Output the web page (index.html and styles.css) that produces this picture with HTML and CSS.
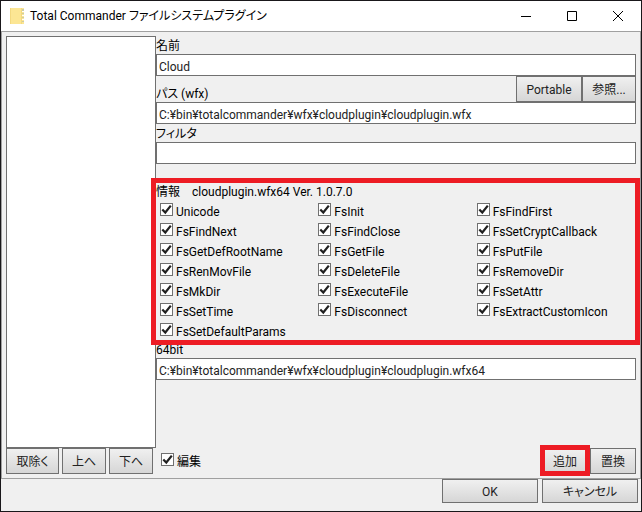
FILE: index.html
```html
<!DOCTYPE html>
<html lang="ja">
<head>
<meta charset="utf-8">
<meta name="viewport" content="width=device-width, initial-scale=1">
<title>Total Commander ファイルシステムプラグイン</title>
<link rel="stylesheet" href="styles.css">
</head>
<body>
<div class="window">
  <header class="titlebar">
    <svg class="app-icon" viewBox="0 0 14 16" aria-hidden="true">
      <path fill="#fce694" d="M0 0h14v16H0z"/>
      <path fill="#f3d980" d="M0 0h1v16H0zM11 0h1v16h-1z"/>
      <path fill="#c9cba8" d="M12 1h2v2h-2zM12 5h2v1h-2zM12 9h2v1h-2zM12 13h2v1h-2z"/>
      <path fill="#fff" d="M12 3h2v1h-2zM12 7h2v1h-2zM12 11h2v1h-2z"/>
    </svg>
    <h1 class="title">Total Commander ファイルシステムプラグイン</h1>
    <div class="window-controls">
      <button class="control" type="button" aria-label="最小化"><svg viewBox="0 0 10 10"><path d="M0 5.5h10"/></svg></button>
      <button class="control" type="button" aria-label="最大化"><svg viewBox="0 0 10 10"><path d="M.5.5h9v9h-9z"/></svg></button>
      <button class="control" type="button" aria-label="閉じる"><svg viewBox="0 0 10 10"><path d="M0 0l10 10M10 0L0 10"/></svg></button>
    </div>
  </header>

  <main class="panel">
    <div class="plugin-list" role="listbox" aria-label="プラグイン"></div>
    <form class="details">
      <div class="label-row"><label for="name">名前</label></div>
      <input class="field" id="name" type="text" value="Cloud">
      <div class="label-row path-row">
        <label for="path">パス (wfx)</label>
        <button class="button portable" type="button">Portable</button>
        <button class="button browse" type="button">参照...</button>
      </div>
      <input class="field" id="path" type="text" value="C:¥bin¥totalcommander¥wfx¥cloudplugin¥cloudplugin.wfx">
      <div class="label-row"><label for="filter">フィルタ</label></div>
      <input class="field" id="filter" type="text">
      <section class="info highlight">
        <p class="info-title"><span>情報</span><span>cloudplugin.wfx64 Ver. 1.0.7.0</span></p>
        <div class="functions">
          <label class="check"><input type="checkbox" checked>Unicode</label>
          <label class="check"><input type="checkbox" checked>FsInit</label>
          <label class="check"><input type="checkbox" checked>FsFindFirst</label>
          <label class="check"><input type="checkbox" checked>FsFindNext</label>
          <label class="check"><input type="checkbox" checked>FsFindClose</label>
          <label class="check"><input type="checkbox" checked>FsSetCryptCallback</label>
          <label class="check"><input type="checkbox" checked>FsGetDefRootName</label>
          <label class="check"><input type="checkbox" checked>FsGetFile</label>
          <label class="check"><input type="checkbox" checked>FsPutFile</label>
          <label class="check"><input type="checkbox" checked>FsRenMovFile</label>
          <label class="check"><input type="checkbox" checked>FsDeleteFile</label>
          <label class="check"><input type="checkbox" checked>FsRemoveDir</label>
          <label class="check"><input type="checkbox" checked>FsMkDir</label>
          <label class="check"><input type="checkbox" checked>FsExecuteFile</label>
          <label class="check"><input type="checkbox" checked>FsSetAttr</label>
          <label class="check"><input type="checkbox" checked>FsSetTime</label>
          <label class="check"><input type="checkbox" checked>FsDisconnect</label>
          <label class="check"><input type="checkbox" checked>FsExtractCustomIcon</label>
          <label class="check"><input type="checkbox" checked>FsSetDefaultParams</label>
        </div>
      </section>
      <div class="label-row"><label for="path64">64bit</label></div>
      <input class="field" id="path64" type="text" value="C:¥bin¥totalcommander¥wfx¥cloudplugin¥cloudplugin.wfx64">
    </form>
    <div class="list-actions">
      <button class="button remove" type="button">取除く</button>
      <button class="button move" type="button">上へ</button>
      <button class="button move" type="button">下へ</button>
    </div>
    <div class="edit-actions">
      <label class="check edit"><input type="checkbox" checked>編集</label>
      <span class="add highlight"><button class="button" type="button">追加</button></span>
      <button class="button replace" type="button">置換</button>
    </div>
  </main>

  <footer class="footer">
    <button class="button" type="button">OK</button>
    <button class="button" type="button">キャンセル</button>
  </footer>
</div>
</body>
</html>
```
FILE: styles.css
```css
* {
  box-sizing: border-box;
}

body {
  margin: 0;
  color: #000;
  font: 12px/20px Roboto, "Noto Sans CJK JP", sans-serif;
  font-feature-settings: "palt";
}

button,
input {
  font: inherit;
  font-feature-settings: inherit;
  color: inherit;
}

.window {
  display: flex;
  flex-direction: column;
  min-height: 100vh;
  border: 1px solid #19171a;
  background: #f0f0f0;
}

/* Title bar */
.titlebar {
  display: flex;
  align-items: center;
  height: 30px;
  padding-left: 9px;
  background: #fff;
}

.app-icon {
  width: 14px;
  height: 16px;
  margin-right: 6px;
}

.title {
  margin: 0;
  font-size: 12px;
  font-weight: 400;
  white-space: nowrap;
}

.window-controls {
  display: flex;
  margin-left: auto;
}

.control {
  display: grid;
  place-items: center;
  width: 46px;
  height: 30px;
  padding: 0;
  border: 0;
  background: none;
}

.control svg {
  width: 10px;
  height: 10px;
  fill: none;
  stroke: #000;
  overflow: visible;
}

/* Main panel */
.panel {
  flex: 1;
  display: grid;
  grid-template-columns: 150px 1fr;
  grid-template-rows: 1fr 26px;
  padding: 4px;
  border: 1px solid #a0a0a0;
}

.plugin-list {
  border: 1px solid #707070;
  background: #fff;
}

.details {
  display: flex;
  flex-direction: column;
}

.label-row {
  height: 18px;
}

.path-row {
  display: flex;
  height: 26px;
}

.path-row label {
  margin-right: auto;
  padding-top: 8px;
}

.field {
  width: 100%;
  height: 22px;
  padding: 4px 2px 0;
  border: 1px solid #707070;
  border-radius: 0;
  background: #fff;
  color: #222;
}

.button {
  padding: 2px 0 0;
  border: 1px solid #707070;
  border-radius: 0;
  background: linear-gradient(#f0f0f0, #d6d6d6);
  color: #222;
}

.portable {
  width: 66px;
}

.browse {
  width: 54px;
}

.highlight {
  position: relative;
}

.highlight::after {
  content: "";
  position: absolute;
  border: 5px solid #ed1c24;
  pointer-events: none;
}

.info {
  padding-top: 18px;
}

.info::after {
  inset: 14px -4px -5px -5px;
}

.info-title {
  display: flex;
  gap: 12px;
  height: 18px;
  margin: 0;
}

.functions {
  display: grid;
  grid-template-columns: repeat(3, 1fr);
  grid-auto-rows: 20px;
  padding: 0 1px 0 4px;
}

.check {
  display: flex;
  align-items: flex-start;
  gap: 3px;
  white-space: nowrap;
}

.check input {
  appearance: none;
  flex: none;
  width: 13px;
  height: 13px;
  margin: 1px 0 0;
  border: 1px solid #707070;
  background: #fff url("data:image/svg+xml,%3Csvg xmlns='http://www.w3.org/2000/svg' viewBox='0 0 11 11'%3E%3Cpath d='M1.3 5.4l3 3.1L9.8 1.6' fill='none' stroke='%23212121' stroke-width='2.2'/%3E%3C/svg%3E");
}

.functions .check {
  padding-top: 2px;
}

/* Button rows */
.list-actions {
  display: flex;
  gap: 3px;
}

.remove {
  width: 53px;
}

.move {
  width: 44px;
}

.edit-actions {
  display: flex;
}

.edit {
  margin-right: auto;
  padding: 4px 0 0 5px;
}

.add {
  display: flex;
  margin-right: 2px;
}

.add .button,
.replace {
  width: 46px;
}

.add::after {
  inset: -3px -2px -2px;
}

.footer {
  display: flex;
  justify-content: flex-end;
  gap: 4px;
  padding: 0 3px 8px;
}

.footer .button {
  width: 96px;
  height: 24px;
}
```
